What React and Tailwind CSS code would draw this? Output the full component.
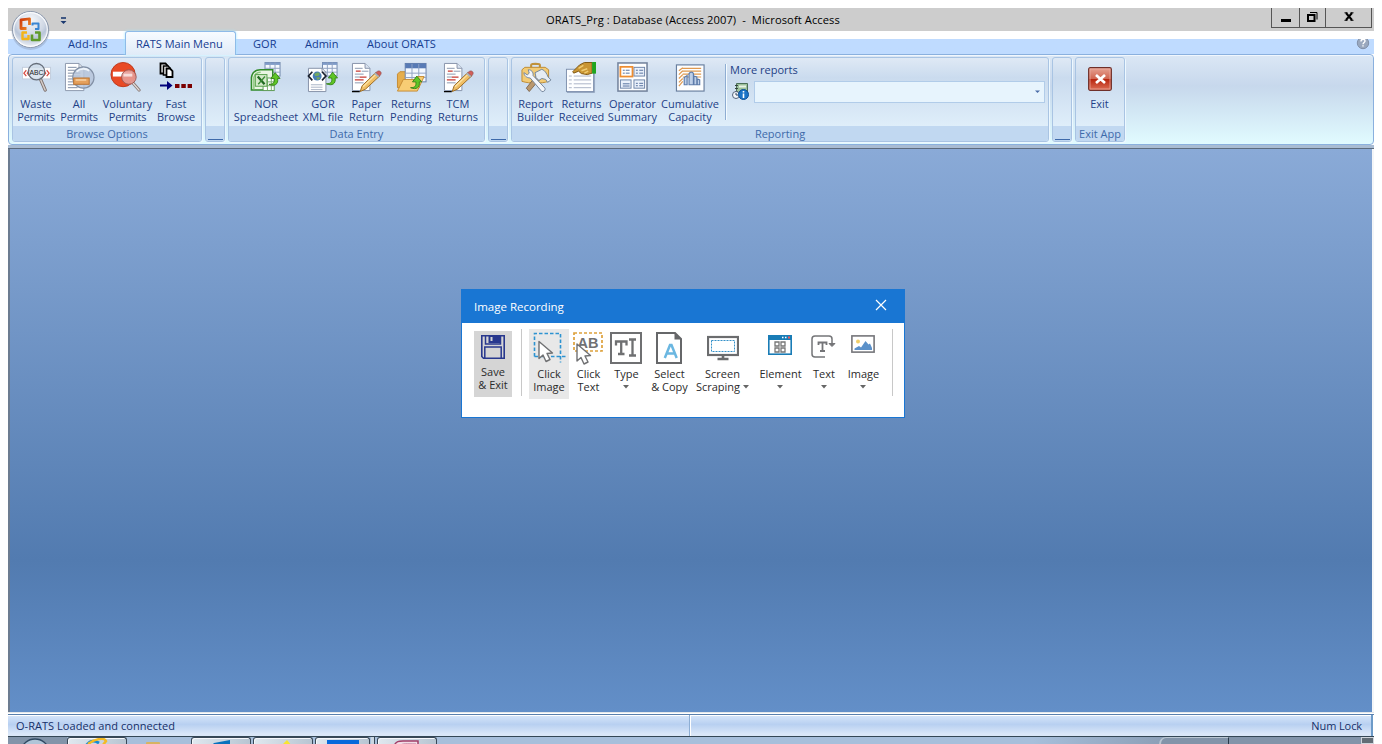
import React from "react";

const Svg = ({ w = 32, h = 32, dw, dh, children, className = "" }) => (
  <svg width={dw || w} height={dh || h} viewBox={`0 0 ${w} ${h}`} className={`shrink-0 ${className}`} fill="none">
    {children}
  </svg>
);

const Big = ({ children, className = "" }) => (
  <Svg dw={31} dh={31} className={className}>{children}</Svg>
);

const OfficeLogo = () => (
  <Svg w={42} h={42}>
    <defs>
      <radialGradient id="orb" cx="50%" cy="25%" r="80%">
        <stop offset="0" stopColor="#f6f8fb" />
        <stop offset="0.5" stopColor="#cfd7e4" />
        <stop offset="0.62" stopColor="#b9c5d8" />
        <stop offset="1" stopColor="#ffffff" />
      </radialGradient>
      <linearGradient id="orange" x1="0" y1="0" x2="1" y2="1">
        <stop offset="0" stopColor="#cf3a0c" />
        <stop offset="1" stopColor="#ee8a25" />
      </linearGradient>
    </defs>
    <circle cx="20.5" cy="21" r="19" fill="#8090a8" opacity="0.35" />
    <circle cx="20.5" cy="19.5" r="18" fill="url(#orb)" stroke="#8a97ac" />
    <circle cx="20.5" cy="19.5" r="16.8" stroke="#fff" strokeWidth="1.2" opacity="0.85" />
    <path d="M16.500 18.500H11V9.800L19.500 8.800V15" stroke="url(#orange)" strokeWidth="2.800" strokeLinejoin="round" />
    <path d="M22.500 15.500V13.500H28.500V19H25" stroke="#3a86d2" strokeWidth="2" strokeLinejoin="round" />
    <path d="M18.500 25V29H12.500V22.500H17" stroke="#f4b416" strokeWidth="2.400" strokeLinejoin="round" />
    <path d="M22 24.500V30H29.500V22.500H25" stroke="#5f9a2a" strokeWidth="2.600" strokeLinejoin="round" />
  </Svg>
);

const WasteIcon = () => (
  <Big>
    <rect x="1.500" y="5.500" width="29" height="12" fill="#fff" stroke="#c3cddc" />
    <path d="M5.500 8.500L3 11.500l2.500 3M9 8.500l-2.500 3 2.500 3M23 8.500l2.500 3-2.500 3M26.500 8.500l2.500 3-2.500 3" stroke="#d94c42" strokeWidth="1.300" />
    <path d="M20 17.500l5 11.500" stroke="#7c6f6c" strokeWidth="3.400" strokeLinecap="round" />
    <path d="M20 17.500l5 11.500" stroke="#d5cdc9" strokeWidth="1.500" strokeLinecap="round" />
    <circle cx="16" cy="10" r="8.500" fill="#cfdcea" fillOpacity="0.75" stroke="#666e7a" strokeWidth="1.400" />
    <text x="16" y="13.500" textAnchor="middle" fontSize="7" fontFamily="Liberation Sans, sans-serif" fill="#222">ABC</text>
  </Big>
);

const AllIcon = () => (
  <Big>
    <path d="M1.500 1.500h14l5 5v23h-19z" fill="#fff" stroke="#8c99ad" />
    <path d="M15.500 1.500v5h5" stroke="#8c99ad" />
    <path d="M4 5.500h9M4 8.500h13M4 11.500h13M4 14.500h13M4 17.500h13M4 20.500h13M4 23.500h13M4 26.500h10" stroke="#7c8aa3" />
    <circle cx="20" cy="16" r="11" fill="#b7c6da" fillOpacity="0.85" stroke="#8391a6" strokeWidth="1.200" />
    <path d="M13 10a10 10 0 0 1 13-1" stroke="#edf3fa" strokeWidth="2" />
    <rect x="10" y="16.500" width="16" height="6.500" fill="#e5a05c" stroke="#b8702e" />
    <path d="M12 18.500h11" stroke="#f7d3a4" strokeWidth="1.500" />
  </Big>
);

const VoluntaryIcon = () => (
  <Big className="-ml-[5px]">
    <circle cx="13.500" cy="13" r="12.500" fill="#e94a25" stroke="#bd3a1d" />
    <rect x="3" y="10" width="20" height="5" fill="#fff" />
    <path d="M23 21l7 8" stroke="#8b7b77" strokeWidth="3.200" strokeLinecap="round" />
    <path d="M23 21l7 8" stroke="#e2dcda" strokeWidth="1.400" strokeLinecap="round" />
    <circle cx="19.500" cy="15.500" r="7.500" fill="#e79b95" fillOpacity="0.9" stroke="#a05751" />
    <path d="M14 13.500h9" stroke="#f8dcd9" strokeWidth="3" />
  </Big>
);

const FastIcon = () => (
  <Svg w={34}>
    <path d="M1.500 1.500h5l2 2v8h-7z" fill="#fff" stroke="#000" strokeWidth="1.800" />
    <path d="M4.500 4h4.500l2 2v7H4.500z" fill="#fff" stroke="#000" strokeWidth="1.600" />
    <path d="M7.500 6.500h3.500l2.500 2.500v6h-6z" fill="#fff" stroke="#000" strokeWidth="1.800" />
    <path d="M1 23.500h10" stroke="#00007b" strokeWidth="2" />
    <path d="M8 19l5.500 4.500L8 28z" fill="#00007b" />
    <path d="M16 22h4.500v4H16zM22.300 22h4.500v4h-4.500zM28.600 22h4.400v4h-4.400z" fill="#7b0000" />
  </Svg>
);

const MiniTable = ({ x = 15, y = 1, w = 15, h = 15 }) => (
  <g>
    <rect x={x} y={y} width={w} height={h} fill="#f5f9ff" stroke="#7187ab" />
    <rect x={x} y={y} width={w} height={2.5} fill="#7f9bc9" />
    <path d={`M${x} ${y + 6}h${w}M${x} ${y + 10}h${w}M${x + w / 3} ${y}v${h}M${x + (w * 2) / 3} ${y}v${h}`} stroke="#8ea1c0" />
  </g>
);

const GreenArrow = ({ x, y }) => (
  <path d={`M${x} ${y + 12}c5 0 6-2 5.500-6H${x + 2}L${x + 6.5} ${y}l5 6H${x + 9}c1 6-3 8.500-9 6z`} fill="#5fc526" stroke="#318013" strokeWidth="0.900" />
);

const NorIcon = () => (
  <Big className="-ml-[2px]">
    <MiniTable x={15.5} y={0.5} w={15.5} h={14} />
    <path d="M1.500 29V16c1-6 4-8 9-8h13v21z" fill="#eaf6e4" stroke="#318b2b" strokeWidth="1.600" />
    <path d="M4 28V16c1-4 3-5.500 7-5.500" stroke="#8cc77d" strokeWidth="1.500" />
    <rect x="13.500" y="16.500" width="11.500" height="13" fill="#fff" stroke="#5d9a55" />
    <path d="M14 20.500h11M14 24.500h11M18 17v12M22 17v12" stroke="#79ad70" />
    <rect x="5.500" y="13" width="12" height="12" fill="#d5eacb" stroke="#569f4a" />
    <path d="M8 15l7 8" stroke="#206a20" strokeWidth="2.300" />
    <path d="M15.500 15l-7 8" stroke="#3b8b35" strokeWidth="1.400" />
    <GreenArrow x={19.5} y={11} />
  </Big>
);

const XmlIcon = () => (
  <Big className="-ml-[2px]">
    <MiniTable x={16} y={0.5} w={15} h={14} />
    <path d="M1.500 6.500h14l4 4v20h-18z" fill="#fff" stroke="#8492a7" />
    <path d="M15.500 6.500v4h4" stroke="#8492a7" />
    <path d="M4 23.500h12M4 26h12M4 28.500h12" stroke="#a7b3c5" />
    <path d="M5.500 10L1.500 14.500l4 4.500M15.500 10l4 4.500-4 4.500" stroke="#18202e" strokeWidth="1.700" />
    <circle cx="10.500" cy="14.500" r="4.600" fill="#477eb4" />
    <path d="M7.500 12l4-1.500 2 2-2 2h-3zM9.500 16l3-.5 1 1.500-2.500 1.500z" fill="#75a961" />
    <GreenArrow x={20} y={10.5} />
  </Big>
);

const PaperIcon = () => (
  <Big>
    <path d="M1.500 1.500h13l5 5v23h-18z" fill="#fff" stroke="#8794aa" />
    <path d="M14.500 1.500v5h5" fill="#dae3f0" stroke="#8794aa" />
    <path d="M4 6.500h8M4 12.500h9M11 9.500h7M4 15.500h5M4 21.500h9" stroke="#8998ae" />
    <path d="M5 9.500h5M9 15.500h7M4 18.500h9" stroke="#c83a32" strokeWidth="1.300" />
    <path d="M9.500 30.500l2-6L25.500 11l4 3.500L15 28z" fill="#f0bf65" stroke="#9c6b25" />
    <path d="M12.500 25.500L26.500 12" stroke="#fbe3a6" strokeWidth="1.300" />
    <path d="M25.500 11l2-1.500c2-1 4.500 1 3.300 3.200L29.500 14.500z" fill="#d25e59" stroke="#8e5050" strokeWidth="0.700" />
    <path d="M24.500 11.500l4 3.500" stroke="#a8b1bd" strokeWidth="1.800" />
    <path d="M1 30.500h8" stroke="#000" strokeWidth="1.200" />
  </Big>
);

const PendingIcon = () => (
  <Big>
    <path d="M1.500 12.500l2.500-2.500h7l2 2.500h11v14h-22.500z" fill="#e6ae4d" stroke="#c68b34" />
    <rect x="9.500" y="1.500" width="21.500" height="19" fill="#f3f8ff" stroke="#687fa7" />
    <rect x="9.500" y="1.500" width="21.500" height="5" fill="#587ab5" />
    <path d="M10 11.500h21M10 16h21M16.500 2v18M23.500 2v18" stroke="#8fa3c4" />
    <path d="M1.500 30l6-12h13l2-3h6.500l-7 15z" fill="#f8cd74" stroke="#c68b34" />
    <GreenArrow x={15} y={14.5} />
  </Big>
);

const BuilderIcon = () => (
  <Svg dw={32} dh={31}>
    <path d="M11 6.500V3c0-1.500 9-1.500 9 0v3.500" stroke="#c0923c" strokeWidth="2.200" />
    <path d="M1.500 8l3-2.500h21L29 8v12c-8 2.500-19 2.500-27.500 0z" fill="#f3cb75" stroke="#bd8b35" />
    <path d="M17 14l-4 4-7 9 3 3.500 8-9.500 4-4z" fill="#b9976c" stroke="#7c644b" strokeWidth="0.900" />
    <path d="M15 11l7-3.500c3 1 5 4 6.500 8l3 3-3.500 2.500-2-3-4-1-3 2-3-3z" fill="#e6edf3" stroke="#73869b" />
    <path d="M3.500 11c0 3 3 5.500 6.500 5.500l12 14c1.800.5 4-1 3.300-3.500L13 14c.5-4-2-6-5-6l1 3.500-2 1.800z" fill="#f3f6fa" stroke="#75869c" />
  </Svg>
);

const ReceivedIcon = () => (
  <Big className="-ml-[2px]">
    <rect x="1.500" y="7.500" width="28" height="23" fill="#fdfeff" stroke="#7f91ae" />
    <path d="M30.500 8v23.500H2" stroke="#94a5bf" />
    <path d="M4 14.500h3M4 18.500h3M4 22.500h3M4 26.500h3M9 14.500h18M9 18.500h18M9 22.500h18M9 26.500h18" stroke="#a9b3c6" />
    <path d="M8 10l7-7 5-2.500h8v11l-5 1.500-6-1-3-2.500-5 2z" fill="#c99532" stroke="#7e5714" />
    <path d="M14 6.500l5-3M17 9l6-2M20 11.500l4-2" stroke="#f0cd73" strokeWidth="1.500" />
    <rect x="28" y="0" width="4" height="12" fill="#1fa51f" />
  </Big>
);

const SummaryIcon = () => (
  <Big>
    <rect x="1" y="1" width="30" height="29" fill="#fdfeff" stroke="#74849e" strokeWidth="1.600" />
    <rect x="17.500" y="5.500" width="11" height="9" fill="#eaf1fb" stroke="#6d84a8" />
    <rect x="3.500" y="18.500" width="11" height="8.500" fill="#eaf1fb" stroke="#6d84a8" />
    <rect x="17.500" y="18.500" width="11" height="8.500" fill="#eaf1fb" stroke="#6d84a8" />
    <rect x="3.500" y="5" width="12.500" height="10" fill="#fff" stroke="#ee8d31" strokeWidth="1.800" />
    <path d="M6 8.500h2M9 8.500h4M6 11.500h2M9 11.500h4M19.500 8.500h2M23 8.500h4M19.500 11.500h2M23 11.500h4M6 22.500h7M6 24.800h7M19.500 22h2M23 22h4M19.500 24.500h2M23 24.500h4" stroke="#536e9c" />
  </Big>
);

const CapacityIcon = () => (
  <Big>
    <rect x="1.500" y="3" width="28.500" height="27" fill="#fdfeff" stroke="#687f9f" strokeWidth="1.200" />
    <path d="M8 6.500h19M8 9.500h19M8 12.500h19M8 15.500h19M8 6l-4 3M8 9l-4 4M8 13l-4 4M8 17l-4 4M8 20l-4 5" stroke="#e0994f" strokeWidth="1.200" />
    <path d="M9.500 23.500V16l3-2v9.500zM14.500 23.500V12c1-2 4-2 4.500 0v11.500zM19.500 23.500v-9l3 1v8zM23 23.500v-6l2.500 1v5z" fill="#bdcfe8" stroke="#5d7cab" strokeWidth="1.200" />
  </Big>
);

const ExitIcon = () => (
  <Svg w={24} h={24}>
    <defs>
      <linearGradient id="red" x1="0" y1="0" x2="0" y2="1">
        <stop offset="0" stopColor="#e6a494" />
        <stop offset="0.480" stopColor="#d16651" />
        <stop offset="0.520" stopColor="#b8260f" />
        <stop offset="1" stopColor="#dd7057" />
      </linearGradient>
    </defs>
    <rect x="0.700" y="0.700" width="22.600" height="22.600" rx="1.500" fill="url(#red)" stroke="#6f302a" strokeWidth="1.300" />
    <rect x="2" y="2" width="20" height="20" stroke="#efb2a5" strokeOpacity="0.700" />
    <path d="M8 8l9 8M17 8l-9 8" stroke="#fff" strokeWidth="2.700" />
  </Svg>
);

const ReportInfoIcon = () => (
  <Svg w={17} h={17} className="mt-[2px]">
    <path d="M4.500.500h11v11h-11z" fill="#9cc19c" stroke="#4c6f58" />
    <path d="M7 3.500h7" stroke="#e8f4e5" strokeWidth="2" />
    <path d="M3 2.500h3M3 5.500h3M3 8.500h3" stroke="#34423c" />
    <circle cx="4" cy="12" r="3.500" fill="#f4f7fb" stroke="#52627a" />
    <path d="M4 10v2h2" stroke="#33445e" />
    <circle cx="11.500" cy="11.500" r="5" fill="#1b74c8" stroke="#0d4f95" />
    <path d="M11.500 8v1.500M11.500 10.500V15" stroke="#fff" strokeWidth="1.600" />
  </Svg>
);

function Item({ w, icon, lines }) {
  return (
    <div className={`flex shrink-0 flex-col items-center ${w}`}>
      <div className="flex h-[35px] items-start">{icon}</div>
      {lines.map((t) => (
        <span key={t} className={`h-[13px] whitespace-nowrap leading-[13px] ${t === "Permits" ? "tracking-[-0.3px]" : ""}`}>{t}</span>
      ))}
    </div>
  );
}

function Group({ w, title, pad = "", children }) {
  return (
    <section className={`flex h-[85px] shrink-0 flex-col overflow-hidden rounded-[3px] border border-[#a9c4e3] bg-linear-to-b from-[#dfe9f5] from-0% via-[#cadbee] via-24% to-[#dfeefa] to-82% shadow-[1px_1px_0_#edf8ff] ${w}`}>
      <div className={`flex h-[68px] pt-[4px] ${pad}`}>{children}</div>
      <div className="h-[15px] whitespace-nowrap bg-[#c1d8f1] text-center leading-[16px] text-[#3e6aaa]">{title}</div>
    </section>
  );
}

const Spacer = () => (
  <Group w="w-[20px]" title={<span className="mx-auto mt-[13px] block h-px w-[15px] bg-[#3e6aaa]" />} />
);

const Down = ({ className = "" }) => (
  <Svg w={6} h={4} className={className}><path d="M0 0h6L3 3.500z" fill="#666" /></Svg>
);

function Tool({ w, icon, lines, arrow, bg = "" }) {
  return (
    <div className={`flex h-[70px] shrink-0 flex-col items-center ${w} ${bg}`}>
      <div className="mr-[2px] flex h-[38px] items-start pt-[3px]">{icon}</div>
      {lines.map((t, i) => (
        <span key={t} className="flex h-[13px] items-center whitespace-nowrap leading-[13px]">
          {t}
          {arrow === "inline" && i === 1 && <Down className="ml-[3px]" />}
        </span>
      ))}
      {arrow === "below" && <Down className="mr-px mt-[5px]" />}
    </div>
  );
}

const Pointer = ({ x, y }) => (
  <path transform={`translate(${x} ${y})`} d="M0 0v17l4-3.500 3 6.500 4-2-3-6 5.500-.5z" fill="#fff" stroke="#707173" strokeWidth="1.400" strokeLinejoin="round" />
);

const ClickImageIcon = () => (
  <Svg w={33} h={34}>
    <path d="M1.500 24.500v-23h26v29M1.500 24.500h31" stroke="#2d93d1" strokeWidth="1.600" strokeDasharray="3.500 2" />
    <Pointer x={6} y={9.5} />
  </Svg>
);
const ClickTextIcon = () => (
  <Svg w={30} h={34}>
    <rect x="1" y="1" width="28" height="18" stroke="#dda13c" strokeWidth="1.700" strokeDasharray="3 2" />
    <text x="15" y="15.500" textAnchor="middle" fontSize="14.500" fontWeight="700" fontFamily="Liberation Sans, sans-serif" fill="#707173">AB</text>
    <Pointer x={4} y={12} />
  </Svg>
);
const TypeIcon = () => (
  <Svg w={32} h={32}>
    <rect x="1" y="1" width="30" height="30" fill="#fff" stroke="#6f7072" strokeWidth="2" />
    <path d="M6 13.500V9.500h10.500v4M11.200 9.500V22M8 22h6.500M19 7.500h7M22.500 7.500v16M19 23.500h7" stroke="#6f7072" strokeWidth="2.300" />
  </Svg>
);
const SelectIcon = () => (
  <Svg w={26} h={32}>
    <path d="M1 1h18l6 6v24H1z" fill="#fff" stroke="#666769" strokeWidth="2" />
    <path d="M18.500 1v6.500H25z" fill="#666769" />
    <path d="M8.800 26l5.200-13h1.500l5.200 13M10.800 21.500h8.500" stroke="#6bb7e1" strokeWidth="2.500" />
  </Svg>
);
const ScreenIcon = () => (
  <Svg w={32} h={26}>
    <rect x="1" y="2" width="30" height="18" fill="#fff" stroke="#6b6c6e" strokeWidth="2.200" />
    <rect x="4.500" y="5.500" width="23" height="11" stroke="#3491c9" strokeDasharray="2 1" />
    <path d="M16 21v3M10.500 24h11" stroke="#6b6c6e" strokeWidth="2.600" />
  </Svg>
);
const ElementIcon = () => (
  <Svg w={24} h={21}>
    <rect x="0.800" y="0.800" width="22.400" height="18.400" fill="#fff" stroke="#197cb6" strokeWidth="1.600" />
    <path d="M0 0h24v5H0z" fill="#197cb6" />
    <path d="M14 2.500h1.500M17 2.500h1.500" stroke="#fff" strokeWidth="1.400" />
    <path d="M20 2.500h2" stroke="#ef575c" strokeWidth="1.800" />
    <path d="M7 7h4v4H7zM13 7h4v4h-4zM7 13h4v4H7zM13 13h4v4h-4z" stroke="#777" strokeWidth="1.300" />
  </Svg>
);
const TextIcon = () => (
  <Svg w={25} h={24}>
    <path d="M14 22H4q-3 0-3-3V4q0-3 3-3h14q3 0 3 3v5" stroke="#747578" strokeWidth="1.500" />
    <path d="M18 8.500h6L21 11.500z" fill="#747578" stroke="#747578" />
    <path d="M7.500 10V7.500h8V10M11.500 7.500V16M9 16h5" stroke="#747578" strokeWidth="1.800" />
  </Svg>
);
const PictureIcon = () => (
  <Svg w={24} h={19}>
    <rect x="0.900" y="0.900" width="22.200" height="16.200" fill="#fff" stroke="#75767a" strokeWidth="1.600" />
    <circle cx="7" cy="6.500" r="2" fill="#f0ce68" />
    <path d="M3.500 15v-1.500L8 11l2 1.500L14.500 6l3 3.500L19 8.500l2 4.500v2z" fill="#5b91ca" />
  </Svg>
);
const SaveIcon = () => (
  <Svg w={24} h={24}>
    <path d="M.800.800h22.400v22.400H2.500L.800 21.500z" stroke="#28388e" strokeWidth="1.600" />
    <path d="M4.500 1v8h15V1" stroke="#28388e" strokeWidth="1.500" />
    <path d="M7.500 1h11.500v7H7.500zM9.500 2v4h2V2z" fill="#28388e" fillRule="evenodd" />
    <path d="M3.800 23V12h16.400v11" stroke="#28388e" strokeWidth="1.500" />
  </Svg>
);

function Dialog() {
  return (
    <div className="absolute left-[453px] top-[281px] flex h-[129px] w-[444px] flex-col border border-[#1976d3] bg-white text-[#2b2b2b]">
      <div className="flex h-[33px] items-center justify-between bg-[#1976d3] pl-[12px] pr-[17px] text-[11.5px] text-white">
        <span>Image Recording</span>
        <Svg w={12} h={12} className="-mt-[3px]"><path d="M1 1l10 10M11 1L1 11" stroke="#fff" strokeWidth="1.200" /></Svg>
      </div>
      <div className="flex pl-[12px] pt-[6px]">
        <div className="mt-[2px] flex h-[66px] w-[38px] flex-col items-center bg-[#d5d5d5] pt-[4px]">
          <SaveIcon />
          <span className="mt-[6px] leading-[13px]">Save</span>
          <span className="whitespace-nowrap leading-[13px]">&amp; Exit</span>
        </div>
        <div className="ml-[9px] h-[67px] w-px bg-[#c8c8c8]" />
        <Tool w="ml-[7px] w-[40px]" bg="bg-[#e8e8e8]" icon={<div className="pl-[2px]"><ClickImageIcon /></div>} lines={["Click", "Image"]} />
        <Tool w="w-[39px]" icon={<ClickTextIcon />} lines={["Click", "Text"]} />
        <Tool w="w-[37px]" icon={<TypeIcon />} lines={["Type"]} arrow="below" />
        <Tool w="w-[49px]" icon={<SelectIcon />} lines={["Select", "& Copy"]} />
        <Tool w="w-[57px]" icon={<div className="pl-[2px] pt-[3px]"><ScreenIcon /></div>} lines={["Screen", "Scraping"]} arrow="inline" />
        <Tool w="w-[59px]" icon={<div className="pt-[3px]"><ElementIcon /></div>} lines={["Element"]} arrow="below" />
        <Tool w="w-[28px]" icon={<div className="pl-px pt-[3px]"><TextIcon /></div>} lines={["Text"]} arrow="below" />
        <Tool w="w-[51px]" icon={<div className="pt-[3px]"><PictureIcon /></div>} lines={["Image"]} arrow="below" />
        <div className="ml-[3px] h-[67px] w-px bg-[#c8c8c8]" />
      </div>
    </div>
  );
}

const TaskButton = ({ w, children }) => (
  <div className={`flex h-full shrink-0 justify-center overflow-hidden rounded-t-[3px] border border-b-0 border-[#394857] bg-linear-to-r from-[#e0e8ef] to-[#b7c5d2] shadow-[inset_1px_1px_0_#f5f8fb] ${w}`}>
    {children}
  </div>
);

export default function App() {
  return (
    <div className="h-[744px] w-[1382px] overflow-hidden bg-white pl-[8px] pt-[8px] font-['Open_Sans','Noto_Sans',sans-serif] text-[11px] text-[#1e3f86]">
      <div className="relative flex h-[736px] w-[1366px] flex-col">
        <header className="flex h-[23px] shrink-0 bg-[#cdcdcd]">
          <div className="w-[110px] pl-[52px] pt-[9px]">
            <Svg w={7} h={8}><path d="M1 1h5" stroke="#1c3a70" strokeWidth="1.600" /><path d="M.500 4h6l-3 3z" fill="#1c3a70" /></Svg>
          </div>
          <h1 className="flex-1 whitespace-pre pl-[428px] text-[11.15px] leading-[23px] tracking-[0.09px] text-black">ORATS_Prg : Database (Access 2007)  -  Microsoft Access</h1>
          <div className="mr-[2px] flex h-[20px] border border-t-0 border-[#555]">
            <div className="flex w-[28px] items-center justify-center border-r border-[#555]"><Svg w={10} h={10}><path d="M0 7.500h10" stroke="#000" strokeWidth="3" /></Svg></div>
            <div className="flex w-[26px] items-center justify-center border-r border-[#555]">
              <Svg w={11} h={11} className="-mt-[2px]"><path d="M3 1.500h7v7" stroke="#000" /><rect x="1" y="4" width="6.500" height="6" stroke="#000" strokeWidth="2" /></Svg>
            </div>
            <div className="flex w-[45px] items-center justify-center"><Svg w={10} h={9} className="-mt-[2px]"><path d="M2 1l6 7M8 1L2 8" stroke="#000" strokeWidth="2" /><path d="M0.500.800h3M6.500.800h3M0.500 8.300h3M6.500 8.300h3" stroke="#000" /></Svg></div>
          </div>
        </header>

        <nav className="flex h-[23px] shrink-0 bg-linear-to-b from-white from-[8px] to-[#bfdbff] to-[8px] leading-[25px] text-[#153c90]">
          <span className="w-[117px] pl-[60px] tracking-[0.1px]">Add-Ins</span>
          <span className="z-10 h-[24px] w-[111px] rounded-t-[3px] border border-b-0 border-[#8ebbe8] bg-linear-to-b from-[#f7fbff] to-[#e0ebf8] pl-[10px] leading-[23px] shadow-[0_0_3px_#a4e7ff]">RATS Main Menu</span>
          <span className="w-[69px] pl-[17px] tracking-[0.1px]">GOR</span>
          <span className="w-[62px]">Admin</span>
          <span className="flex-1 tracking-[0.06px]">About ORATS</span>
          <Svg w={16} h={16} className="mr-[3px] mt-[4px]">
            <circle cx="8" cy="8" r="5.700" fill="#9aa8be" stroke="#8190a8" />
            <path d="M6 6.500c0-3 4-3 4-.5 0 1.500-2 1.500-2 3.300M8 10.200v1.400" stroke="#fff" strokeWidth="1.400" />
            <path d="M0 0h16v4H0z" fill="#fff" />
          </Svg>
        </nav>

        <main className="flex h-[91px] shrink-0 gap-[3px] rounded-[4px] border border-[#8ab0de] bg-linear-to-b from-[#dbe7f5] from-0% via-[#c7d8ec] via-35% to-[#e1fbff] to-100% pl-[3px] pt-[2px] shadow-[inset_0_1px_0_#f1f7fd]">
          <Group w="w-[190px]" title="Browse Options">
            <Item w="w-[46px]" icon={<WasteIcon />} lines={["Waste", "Permits"]} />
            <Item w="w-[40px]" icon={<AllIcon />} lines={["All", "Permits"]} />
            <Item w="w-[57px]" icon={<VoluntaryIcon />} lines={["Voluntary", "Permits"]} />
            <Item w="w-[40px]" icon={<FastIcon />} lines={["Fast", "Browse"]} />
          </Group>
          <Spacer />
          <Group w="w-[257px]" title="Data Entry" pad="pl-[3px]">
            <Item w="w-[68px]" icon={<NorIcon />} lines={["NOR", "Spreadsheet"]} />
            <Item w="w-[46px]" icon={<XmlIcon />} lines={["GOR", "XML file"]} />
            <Item w="w-[41px]" icon={<PaperIcon />} lines={["Paper", "Return"]} />
            <Item w="w-[48px]" icon={<PendingIcon />} lines={["Returns", "Pending"]} />
            <Item w="w-[46px]" icon={<PaperIcon />} lines={["TCM", "Returns"]} />
          </Group>
          <Spacer />
          <Group w="w-[538px]" title="Reporting" pad="pl-[3px]">
            <Item w="w-[41px]" icon={<BuilderIcon />} lines={["Report", "Builder"]} />
            <Item w="w-[51px]" icon={<ReceivedIcon />} lines={["Returns", "Received"]} />
            <Item w="w-[51px]" icon={<SummaryIcon />} lines={["Operator", "Summary"]} />
            <Item w="w-[64px]" icon={<CapacityIcon />} lines={["Cumulative", "Capacity"]} />
            <div className="ml-[3px] mt-[2px] h-[56px] w-px shrink-0 bg-[#8fadd2] shadow-[1px_0_0_#f4fbff]" />
            <div className="flex flex-1 flex-col pl-[4px]">
              <span className="h-[19px] leading-[16px]">More reports</span>
              <div className="flex gap-[5px] pl-[2px]">
                <ReportInfoIcon />
                <div className="flex h-[22px] w-[291px] items-center justify-end border border-[#b1cce9] bg-[#e7f4fd] pr-[4px]">
                  <Svg w={5} h={4}><path d="M0 .500h5L2.500 3z" fill="#4a6ca8" /></Svg>
                </div>
              </div>
            </div>
          </Group>
          <Spacer />
          <Group w="w-[50px]" title="Exit App">
            <Item w="w-[47px]" icon={<div className="pt-[5px]"><ExitIcon /></div>} lines={["Exit"]} />
          </Group>
        </main>
        <div className="h-[4px] shrink-0 border-b border-[#5c6b7e] bg-[#a9bcd3]" />

        <section className="h-[563px] shrink-0 border-l-2 border-r-2 border-l-[#6c7c91] border-r-[#f4f6f8] bg-linear-to-b from-[#8aaad7] from-0% via-[#527bb0] via-73% to-[#638fc8] to-100%" />
        <div className="h-[2px] shrink-0 border-t border-[#e3e7ea] bg-white" />

        <footer className="flex h-[23px] shrink-0 border-y border-t-[#5a80ad] border-b-[#344755] bg-linear-to-b from-[#d7e6fa] from-0% via-[#b8d0f1] via-45% to-[#dae7f8] to-90% leading-[21px] text-[#152f68] shadow-[inset_0_1px_0_#fff]">
          <span className="w-[682px] border-r border-[#8daed4] pl-[8px] tracking-[0.04px] shadow-[1px_0_0_#fff]">O-RATS Loaded and connected</span>
          <span className="flex-1 pr-[9px] text-right tracking-[-0.1px]">Num Lock</span>
          <span className="w-[3px] border-l-2 border-[#6d9bc8] bg-white" />
        </footer>
        <div className="flex h-[7px] shrink-0 overflow-hidden bg-linear-to-r from-[#a7bfdb] from-75% to-[#8294aa] to-88%">
          <div className="flex w-[59px] justify-center bg-[#8294a9]"><Svg w={30} h={8}><ellipse cx="12" cy="13" rx="13" ry="11" fill="#b0c5d8" stroke="#304962" strokeWidth="1.500" /></Svg></div>
          <TaskButton w="w-[60px]"><Svg w={28} h={8}><path d="M3 8c4-6 8-6 13-3" stroke="#168bd4" strokeWidth="3" /><path d="M5 6C12 1 21-1 23 3l-3 4" stroke="#f4ba23" strokeWidth="2.500" /></Svg></TaskButton>
          <div className="flex w-[64px] items-end justify-center"><span className="mr-[12px] h-[2px] w-[14px] rounded-t-[1px] bg-[#d7b362]" /></div>
          <TaskButton w="w-[60px]"><Svg w={26} h={8}><path d="M3 8l3-3L22 2v6z" fill="#0872bd" /></Svg></TaskButton>
          <TaskButton w="ml-[2px] w-[60px]"><Svg w={20} h={8}><path d="M8 8l6-6 5 6z" fill="#f8e431" /></Svg></TaskButton>
          <TaskButton w="ml-[2px] w-[55px]"><span className="mt-[2px] h-[7px] w-[32px] bg-[#0869db]" /></TaskButton>
          <span className="ml-px w-[4px] border-r border-[#394857] bg-[#cbd7e2]" />
          <TaskButton w="ml-[2px] w-[60px]"><Svg w={28} h={8}><path d="M1 8c2-5 5-5 9-5h15v6" fill="#f1dce5" stroke="#a33e68" strokeWidth="1.500" /><path d="M6 8c3-3 8-2 17-2" stroke="#c47c9a" /></Svg></TaskButton>
          <div className="flex flex-1 justify-end">
            <div className="h-full w-[70px] rounded-tl-[20px] border-l-2 border-t border-r border-[#b9c6d2] border-r-[#293a49] bg-[#8294a9]" />
            <div className="flex w-[145px] justify-end bg-[#8294a9]"><span className="h-full w-[13px] border border-[#d0d6dd] bg-[#626d76]" /></div>
          </div>
        </div>
        <Dialog />
        <div className="absolute left-[2px] top-[2px] z-20"><OfficeLogo /></div>
      </div>
    </div>
  );
}
